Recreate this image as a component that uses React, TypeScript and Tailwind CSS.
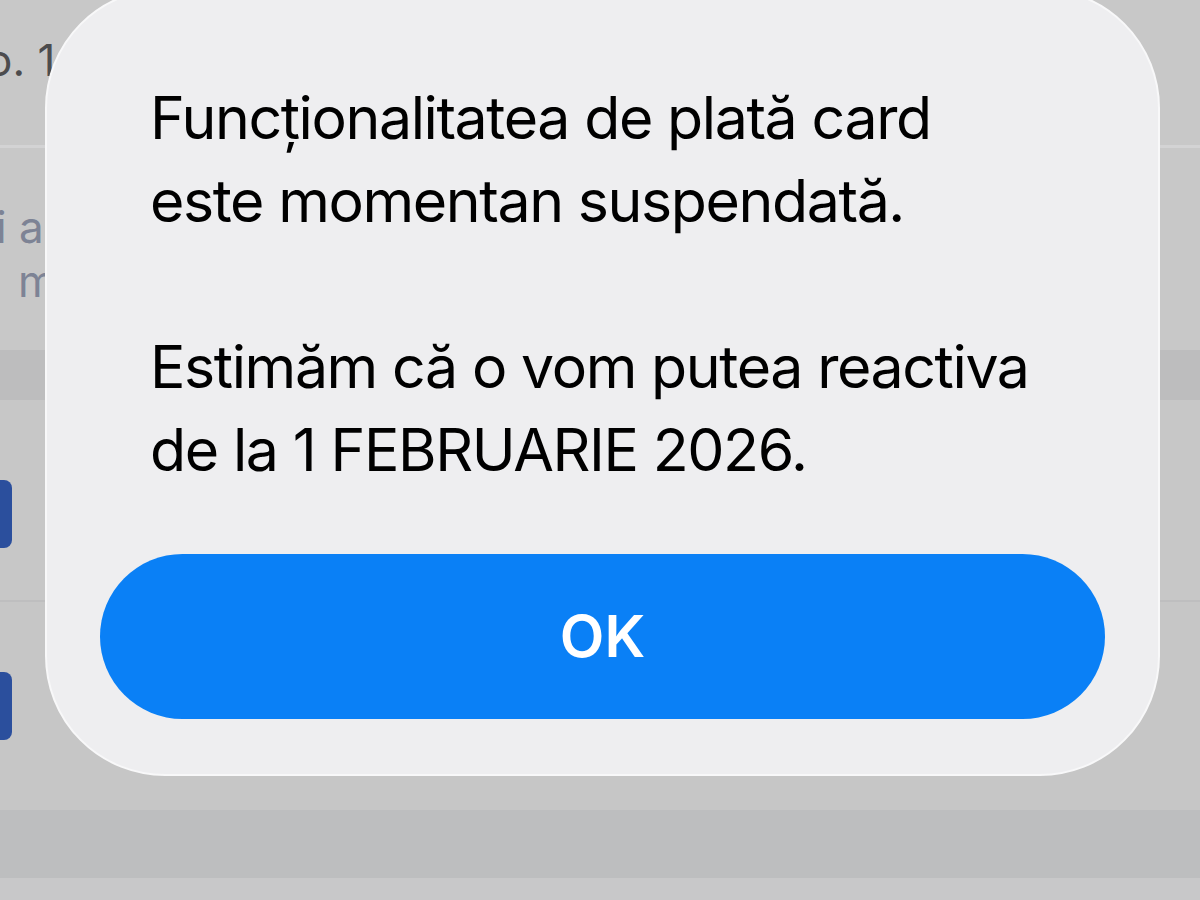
import React from "react";

export default function App() {
  return (
    <div className="relative w-[1200px] h-[900px] overflow-hidden bg-[#c8c8c8]" style={{ fontFamily: "Inter, 'Noto Sans', sans-serif" }}>
      {/* background content (blurred app behind alert) */}
      <div className="flex flex-col w-full h-full">
        <div className="h-[145px] flex items-start pt-[38px] pl-0 text-[44px] text-[#4c4c4e] leading-none -ml-[14px]">o. 1</div>
        <div className="h-[3px] bg-[#d3d3d4]" />
        <div className="h-[202px] flex flex-col pt-[52px] text-[44px] leading-[54px] text-[#7d8395]">
          <span className="-ml-[4px]">i a</span>
          <span className="ml-[18px]">m</span>
        </div>
        <div className="h-[50px] bg-[#bdbdbe]" />
        <div className="h-[200px] flex items-center bg-[#c7c7c7]">
          <div className="w-[12px] h-[68px] rounded-r-[8px] bg-[#2b4f9d] mt-[28px]" />
        </div>
        <div className="h-[2px] bg-[#bebebf]" />
        <div className="h-[208px] flex items-center bg-[#c6c6c6]">
          <div className="w-[12px] h-[68px] rounded-r-[8px] bg-[#2b4f9d]" />
        </div>
        <div className="h-[68px] bg-[#bdbebf]" />
        <div className="flex-1 bg-[#c8c8c9]" />
      </div>

      {/* alert */}
      <div className="absolute left-[45px] top-[-12px] w-[1115px] h-[788px] rounded-[120px] bg-[#eeeef0] border-[2px] border-[#f8f8f9] flex flex-col">
        <div className="pl-[103px] pt-[86px] text-[59px] leading-[83px] text-black tracking-[-1.4px]">
          <p>Funcționalitatea de plată card</p>
          <p>este momentan suspendată.</p>
          <p>&nbsp;</p>
          <p>Estimăm că o vom putea reactiva</p>
          <p>de la 1 FEBRUARIE 2026.</p>
        </div>
        <div className="px-[53px] mt-[63px]">
          <button className="w-full h-[165px] rounded-full bg-[#0a80f6] text-white text-[58px] font-semibold flex items-center justify-center">
            OK
          </button>
        </div>
      </div>
    </div>
  );
}
